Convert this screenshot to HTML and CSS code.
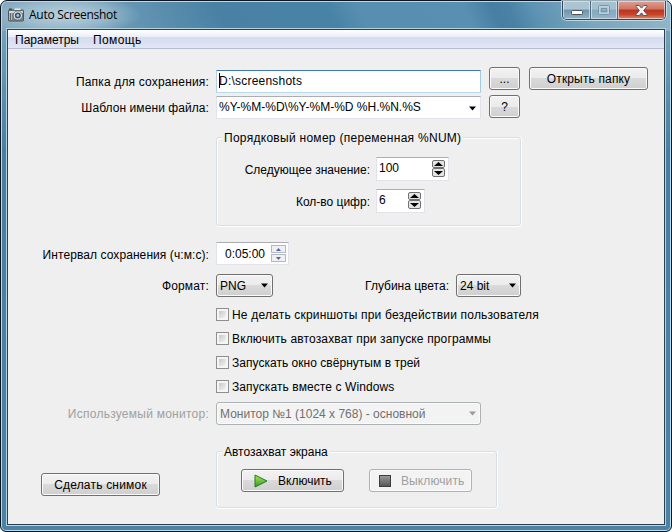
FILE: index.html
```html
<!DOCTYPE html>
<html lang="ru">
<head>
<meta charset="utf-8">
<title>Auto Screenshot</title>
<link rel="stylesheet" href="styles.css">
</head>
<body>
<div class="window">
  <header class="titlebar">
    <svg class="app-icon" width="16" height="14" viewBox="0 0 16 14">
      <rect x="1" y="0.5" width="3" height="2" fill="#3d464e"/>
      <rect x="0.5" y="2" width="15" height="11" rx="1" fill="#7c858b" stroke="#4d565d"/>
      <path d="M1 3h14v2H1z" fill="#d4d9dc"/>
      <path d="M1 5h3v7H1z" fill="#aeb7bd"/>
      <rect x="2" y="5" width="1" height="7" fill="#5c666c"/>
      <path d="M6 2l1-1.5h5L13 2z" fill="#e5e8ea"/>
      <circle cx="9.8" cy="7.5" r="4.6" fill="#e3e7ea" stroke="#4d565d" stroke-width=".7"/>
      <circle cx="9.8" cy="7.5" r="3" fill="#34546a"/>
      <circle cx="9.8" cy="7.5" r="1.4" fill="#a7c0cf"/>
    </svg>
    <span class="title">Auto Screenshot</span>
    <div class="controls">
      <div class="ctl min"><svg width="12" height="5" viewBox="0 0 12 5"><rect x=".5" y=".5" width="11" height="4" rx="1" fill="#fff" stroke="#4a4f60"/></svg></div>
      <div class="ctl max"><svg width="12" height="10" viewBox="0 0 12 10"><rect x="1.5" y="1.5" width="9" height="7" fill="none" stroke="#bdd0dc" stroke-width="2"/><rect x=".5" y=".5" width="11" height="9" rx="1" fill="none" stroke="#7795a8"/><rect x="3.5" y="3.5" width="5" height="3" fill="none" stroke="#7795a8"/></svg></div>
      <div class="ctl close"><svg width="13" height="11" viewBox="0 0 13 11"><path d="M1 .5h3.3l2.2 2.6L8.7.5H12v1L8.7 5.5 12 9.500v1H8.700L6.500 7.900 4.300 10.500H1v-1l3.300-4L1 1.500z" fill="#f6f6f6" stroke="#53556a"/></svg></div>
    </div>
  </header>
  <main class="client">
    <nav class="menu"><span class="m1">Параметры</span><span class="m2">Помощь</span></nav>
    <div class="form">
      <div class="row r-folder">
        <label class="lab l1">Папка для сохранения:</label>
        <div class="field focus"><i class="caret"></i><span class="t-folder">D:\screenshots</span></div>
        <div class="btn small"><span>...</span></div>
        <div class="btn open"><span class="t-open">Открыть папку</span></div>
      </div>
      <div class="row r-template">
        <label class="lab l2">Шаблон имени файла:</label>
        <div class="field combo"><span class="t-template">%Y-%M-%D\%Y-%M-%D %H.%N.%S</span><svg class="arrow" width="9" height="5" viewBox="0 0 9 5"><path d="M1 .5h7L4.500 4.500z"/></svg></div>
        <div class="btn small q"><span>?</span></div>
      </div>
      <section class="group g-number">
        <div class="legend t-number">Порядковый номер (переменная %NUM)</div>
        <div class="row r-next">
          <label class="lab l3">Следующее значение:</label>
          <div class="field spin"><span>100</span><div class="steps"><i><svg width="9" height="4" viewBox="0 0 9 4"><path d="M0 4h9L4.500 0z"/></svg></i><i><svg width="9" height="4" viewBox="0 0 9 4"><path d="M0 0h9L4.500 4z"/></svg></i></div></div>
        </div>
        <div class="row r-digits">
          <label class="lab l4">Кол-во цифр:</label>
          <div class="field spin narrow"><span>6</span><div class="steps"><i><svg width="9" height="4" viewBox="0 0 9 4"><path d="M0 4h9L4.500 0z"/></svg></i><i><svg width="9" height="4" viewBox="0 0 9 4"><path d="M0 0h9L4.500 4z"/></svg></i></div></div>
        </div>
      </section>
      <div class="row r-interval">
        <label class="lab l5">Интервал сохранения (ч:м:с):</label>
        <div class="field time"><span>0:05:00</span><div class="updown"><i><svg width="5" height="3" viewBox="0 0 5 3"><path d="M0 3h5L2.500 0z"/></svg></i><i><svg width="5" height="3" viewBox="0 0 5 3"><path d="M0 0h5L2.500 3z"/></svg></i></div></div>
      </div>
      <div class="row r-format">
        <label class="lab l6">Формат:</label>
        <div class="btn select png"><span>PNG</span><svg class="arrow" width="9" height="5" viewBox="0 0 9 5"><path d="M1 .5h7L4.500 4.500z"/></svg></div>
        <label class="lab l7">Глубина цвета:</label>
        <div class="btn select bit"><span>24 bit</span><svg class="arrow" width="9" height="5" viewBox="0 0 9 5"><path d="M1 .5h7L4.500 4.500z"/></svg></div>
      </div>
      <div class="checks">
        <div class="check"><i></i><span class="c1">Не делать скриншоты при бездействии пользователя</span></div>
        <div class="check"><i></i><span class="c2">Включить автозахват при запуске программы</span></div>
        <div class="check"><i></i><span class="c3">Запускать окно свёрнутым в трей</span></div>
        <div class="check"><i></i><span class="c4">Запускать вместе с Windows</span></div>
      </div>
      <div class="row r-monitor">
        <label class="lab l8">Используемый монитор:</label>
        <div class="btn select monitor off"><span class="t-monitor">Монитор №1 (1024 x 768) - основной</span><svg class="arrow" width="9" height="5" viewBox="0 0 9 5"><path d="M1 .5h7L4.500 4.500z"/></svg></div>
      </div>
      <div class="bottom">
        <div class="btn shot"><span class="t-shot">Сделать снимок</span></div>
        <section class="group g-capture">
          <div class="legend t-capture">Автозахват экрана</div>
          <div class="btn act"><svg width="14" height="14" viewBox="0 0 14 14"><defs><linearGradient id="play" x1="0" y1="0" x2="0" y2="1"><stop offset="0" stop-color="#b4e45c"/><stop offset="1" stop-color="#2f9c22"/></linearGradient></defs><path d="M1 1l12 6L1 13z" fill="url(#play)" stroke="#267a1c"/></svg><span class="t-on">Включить</span></div>
          <div class="btn act off stop"><svg width="12" height="12" viewBox="0 0 12 12"><defs><linearGradient id="stop" x1="0" y1="0" x2="0" y2="1"><stop offset="0" stop-color="#9b9b9b"/><stop offset="1" stop-color="#555"/></linearGradient></defs><rect x=".5" y=".5" width="11" height="11" fill="url(#stop)" stroke="#3d3d3d"/></svg><span class="t-off">Выключить</span></div>
        </section>
      </div>
    </div>
  </main>
</div>
</body>
</html>
```
FILE: styles.css
```css
* { box-sizing: border-box; }
html, body { margin: 0; }
body {
  width: 672px; height: 532px; overflow: hidden; background: #fff;
  font: 12px/16px "Liberation Sans", Arial, sans-serif; color: #000;
}
i { display: block; font-style: normal; }
svg { display: block; flex: none; }
span, label { white-space: nowrap; }

.window {
  width: 672px; height: 532px; padding: 0 5px; position: relative;
  border: 1px solid #0c1420; border-radius: 7px 7px 6px 6px;
  box-shadow: inset 0 0 0 1px #b9dcec;
  background:
    radial-gradient(ellipse 75px 22px at 65px 14px, rgba(205,222,230,.8), rgba(190,214,226,.45) 60%, transparent),
    linear-gradient(65deg, #86a9bd 0, #6394b2 130px, #4981a4 205px, #4783a6 305px, #588fb0 335px, #5990b1 430px, #467fa3 455px, #4a82a5 470px, #5b92b1 490px, #7ba6be 540px, #95b6c9 620px) 0 0/100% 30px no-repeat,
    linear-gradient(#7fa8bf, #477fa2 150px, #4a83a6);
}
.titlebar { height: 28px; display: flex; align-items: flex-start; padding-left: 2px; }
.app-icon { margin-top: 7px; }
.title { margin: 6px 0 0 5px; font: 12px/16px "Open Sans", "Noto Sans", sans-serif; letter-spacing: -.28px; }
.controls {
  margin: 0 0 0 auto; height: 19px; display: flex;
  border: 1px solid #35495a; border-top: 0; border-radius: 0 0 5px 5px; overflow: hidden;
  box-shadow: 0 0 0 1px rgba(220,236,244,.7);
}
.ctl { display: flex; align-items: center; justify-content: center; width: 28px; box-shadow: inset 0 0 0 1px rgba(225,238,245,.65); border-right: 1px solid #4f6b7e; background: linear-gradient(#abc4d3 0 45%, #6f93aa 50%, #8fb3c8); }
.ctl.min { padding-top: 5px; }
.ctl.max { width: 27px; background: linear-gradient(#a5c0d0 0 45%, #86a9bf 50%, #94b5c9); }
.ctl.close { width: 47px; border-right: 0; background: linear-gradient(#dfa093 0, #cf7363 45%, #b63521 50%, #c8442b 75%, #e08c6c); }
.client {
  width: 658px; height: 496px; border: 1px solid #2c3f4a; background: #efefef;
  outline: 1px solid #b5d4e2; margin-left: 1px;
}
.menu {
  height: 19px; display: flex; padding: 2px 7px 0; border-bottom: 1px solid #b6bccc;
  background: linear-gradient(#fff 0, #e9edf6 7px, #d5dbed 7px, #e1e6f5 18px);
}
.m2 { margin-left: 14px; letter-spacing: .4px; }
.form { padding-top: 18px; }
.row { display: flex; align-items: flex-start; }
.lab { width: 201px; margin-right: 1px; padding-top: 7px; text-align: right; flex: none; }

.btn {
  height: 23px; border: 1px solid #707070; border-radius: 3px; flex: none;
  display: flex; align-items: center; justify-content: center;
  background: linear-gradient(#f2f2f2 0, #ebebeb 50%, #dadada 50%, #cfcfcf);
  box-shadow: inset 0 0 0 1px #fbfbfb;
}
.field {
  height: 23px; background: #fff; border: 1px solid #e2e3ea; border-top-color: #abadb3;
  border-radius: 1px; flex: none; display: flex; position: relative; padding: 2px 0 0 2px;
}
.row > .lab + .field, .row > .lab + .btn { margin-left: 6px; }
.arrow { margin-left: auto; }

.r-folder { height: 28px; }
.focus { width: 265px; margin-top: 3px; border-color: #3d7bad #a4c9e3 #b7d9ed #b5cfe7; }
.caret { position: absolute; left: 2px; top: 2px; width: 1px; height: 15px; background: #000; }
.small { width: 31px; margin-left: 8px; }
.open { width: 119px; margin-left: 9px; }
.r-template { height: 42px; }
.r-template .lab { padding-top: 5px; }
.combo { width: 265px; margin-top: 1px; padding-right: 3px; }
.combo .arrow { margin-top: 7px; }

.group { position: relative; border: 1px solid #d5dfe5; border-radius: 3px; box-shadow: 0 1px 0 #fff, 1px 0 0 #fff, inset 1px 1px 0 #fff; }
.legend { position: absolute; left: 5px; top: -8px; padding: 0 2px; background: #efefef; white-space: nowrap; }
.g-number { margin-left: 208px; width: 305px; height: 89px; padding-top: 19px; }
.g-number .lab { width: 153px; margin-right: 0; padding-top: 5px; }
.g-number .row { height: 32px; }
.spin { width: 73px; height: 24px; padding-right: 3px; }
.narrow { width: 49px; }
.steps { margin-left: auto; }
.steps i { width: 13px; height: 8px; border: 1px solid #707070; border-radius: 2px; background: #e5e5e5; display: flex; align-items: center; justify-content: center; }
.steps i + i { height: 9px; }
.r-interval { margin-top: 16px; height: 32px; }
.r-interval .lab { padding-top: 5px; }
.time { width: 73px; padding-left: 8px; padding-right: 2px; }
.time > span { padding-top: 1px; }
.updown { margin-left: auto; }
.updown i { width: 15px; height: 8px; border: 1px solid #b4b8c4; background: #f0f0f4; display: flex; align-items: center; justify-content: center; margin-bottom: 1px; }
.updown path { fill: #4866ae; }
.r-format { height: 34px; }
.r-format .lab, .r-monitor .lab { padding-top: 4px; }
.select { justify-content: flex-start; padding: 0 3px; }
.png { width: 57px; }
.r-format .l7 { width: 176px; }
.bit { width: 65px; }
.checks { margin-left: 208px; }
.check { display: flex; align-items: center; height: 13px; margin-bottom: 11px; }
.check i { width: 13px; height: 13px; margin-right: 3px; border: 1px solid #8e8f8f; background: linear-gradient(135deg, #c5c8cf, #f4f4f4) 2px 2px/7px 7px no-repeat #f6f6f6; }
.r-monitor { margin-top: -2px; color: #a0a0a0; height: 49px; }
.off { border-color: #adb2b5; background: #f3f3f3; color: #838383; }
.monitor { width: 265px; color: #707070; }
.off .arrow { fill: #9a9a9a; }
.bottom { display: flex; align-items: flex-start; }
.shot { width: 119px; margin: 22px 0 0 33px; }
.g-capture { width: 281px; height: 57px; margin-left: 56px; padding: 17px 0 0 24px; display: flex; }
.act { width: 103px; justify-content: flex-start; padding-left: 12px; }
.act span { margin-left: 10px; }
.stop { margin-left: 25px; padding-left: 9px; color: #a0a0a0; }

.l1 { letter-spacing: .16px; }
.l2 { letter-spacing: .07px; }
.l5 { letter-spacing: .08px; }
.l6 { letter-spacing: .16px; }
.l8 { letter-spacing: .25px; }
.c1 { letter-spacing: .19px; }
.c2 { letter-spacing: .14px; }
.c3 { letter-spacing: .03px; }
.c4 { letter-spacing: .1px; }
.t-number { letter-spacing: .28px; }
.t-folder { letter-spacing: .22px; }
.t-shot { letter-spacing: .2px; }
.t-open { letter-spacing: .15px; }
.t-off { letter-spacing: .1px; }
```
